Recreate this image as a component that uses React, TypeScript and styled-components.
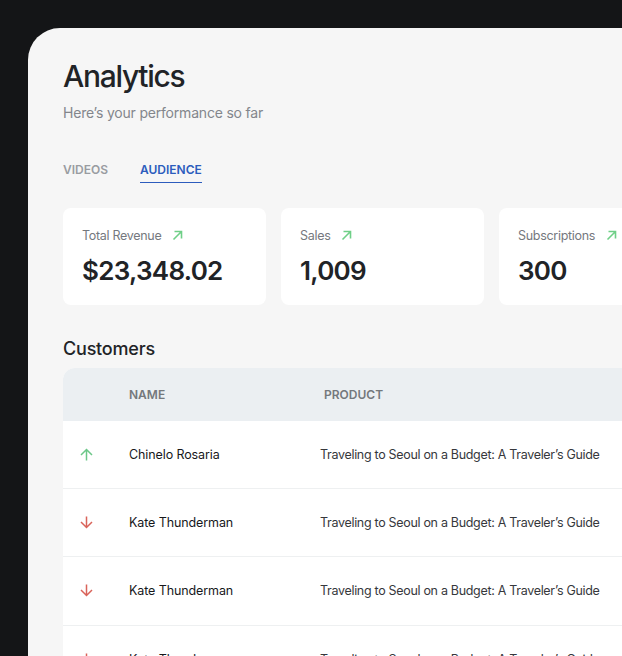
import React from "react";
import styled, { createGlobalStyle } from "styled-components";

const Global = createGlobalStyle`
  html, body { margin: 0; padding: 0; background: #141517; overflow: hidden; }
  body { width: 622px; height: 656px; font-family: Inter, "Liberation Sans", sans-serif; }
`;
const Page = styled.div`
  width: 622px; height: 656px; box-sizing: border-box; padding: 28px 0 0 28px; overflow: hidden;
`;
const Panel = styled.main`
  width: 594px; height: 628px; box-sizing: border-box; background: #f6f6f6; overflow: hidden;
  border-top-left-radius: 32px; padding: 28px 0 0 35px;
`;
const Title = styled.h1`
  margin: 0; font-size: 30px; line-height: 40px; font-weight: 500; color: #212326; letter-spacing: -1.3px;
`;
const Subtitle = styled.p`
  margin: 7px 0 0; font-size: 14px; line-height: 20px; font-weight: 400; color: #83868c; letter-spacing: -0.2px;
`;
const Tabs = styled.nav`
  display: flex; gap: 32px; margin-top: 36px;
`;
const Tab = styled.div<{ $active?: boolean }>`
  font-size: 12px; line-height: 16px; font-weight: 600; padding: 3px 0 4px;
  color: ${(p) => (p.$active ? "#2c5cbd" : "#999ca1")};
  border-bottom: 1px solid ${(p) => (p.$active ? "#2c5cbd" : "transparent")};
`;
const Cards = styled.section`
  display: flex; gap: 15px; margin-top: 25px;
`;
const Card = styled.article`
  width: 203px; height: 97px; flex: none; box-sizing: border-box; background: #fff; border-radius: 8px; padding: 19px;
`;
const CardHead = styled.div`
  display: flex; align-items: center; gap: 11px; height: 17px;
  font-size: 12.5px; color: #75787e; letter-spacing: -0.3px;
`;
const CardValue = styled.div`
  margin-top: 9px; font-size: 26px; line-height: 36px; font-weight: 600; color: #212326; letter-spacing: -0.7px;
`;
const Heading = styled.h2`
  margin: 33px 0 0; font-size: 18px; line-height: 22px; font-weight: 500; color: #212326; letter-spacing: -0.2px;
`;
const Table = styled.section`
  margin-top: 8px; width: 640px; background: #fff; border-top-left-radius: 12px; overflow: hidden;
`;
const HeaderRow = styled.div`
  display: grid; grid-template-columns: 66px 195px 1fr; align-items: center; height: 53px; background: #ebeff2;
  font-size: 12px; font-weight: 600; color: #74787c;
`;
const Row = styled.div`
  display: grid; grid-template-columns: 66px 191px 1fr; align-items: center; height: 68.2px; box-sizing: border-box;
  border-bottom: 1px solid #eef0f1; font-size: 12.5px; color: #36383c; letter-spacing: -0.31px;
`;
const Mark = styled.div`
  display: flex; padding-left: 16px;
`;
const Name = styled.div`
  font-weight: 400; color: #17181b; letter-spacing: -0.1px;
`;

const TrendUp = () => (
  <svg width="11" height="11" viewBox="0 0 11 11" fill="none" stroke="#6fcf87" strokeWidth="1.6">
    <path d="M1.5 9.5 9.5 1.5M2.5 1.5h7v7" />
  </svg>
);
const Arrow = ({ up }: { up: boolean }) => (
  <svg width="15" height="15" viewBox="0 0 15 15" fill="none" stroke={up ? "#6cc788" : "#d9635a"} strokeWidth="1.5">
    {up ? <path d="M7.5 13.5V2.5M2 8l5.5-5.5L13 8" /> : <path d="M7.5 1.5v11M2 7l5.5 5.5L13 7" />}
  </svg>
);

const cards = [
  ["Total Revenue", "$23,348.02"],
  ["Sales", "1,009"],
  ["Subscriptions", "300"],
];
const rows = [
  ["Chinelo Rosaria", true],
  ["Kate Thunderman", false],
  ["Kate Thunderman", false],
  ["Kate Thunderman", false],
] as const;

export default function App() {
  return (
    <Page>
      <Global />
      <Panel>
        <Title>Analytics</Title>
        <Subtitle>Here’s your performance so far</Subtitle>
        <Tabs>
          <Tab>VIDEOS</Tab>
          <Tab $active>AUDIENCE</Tab>
        </Tabs>
        <Cards>
          {cards.map(([label, value]) => (
            <Card key={label}>
              <CardHead>
                {label}
                <TrendUp />
              </CardHead>
              <CardValue>{value}</CardValue>
            </Card>
          ))}
        </Cards>
        <Heading>Customers</Heading>
        <Table>
          <HeaderRow>
            <span />
            <span>NAME</span>
            <span>PRODUCT</span>
          </HeaderRow>
          {rows.map(([name, up], i) => (
            <Row key={i}>
              <Mark>
                <Arrow up={up} />
              </Mark>
              <Name>{name}</Name>
              <div>Traveling to Seoul on a Budget: A Traveler’s Guide</div>
            </Row>
          ))}
        </Table>
      </Panel>
    </Page>
  );
}
